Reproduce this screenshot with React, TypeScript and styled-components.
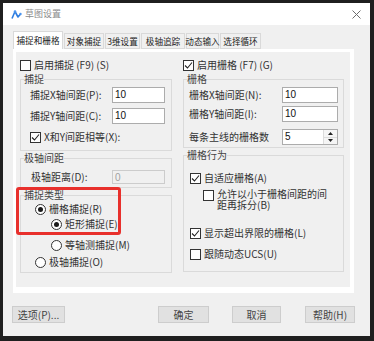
import React from "react";
import styled, { createGlobalStyle } from "styled-components";

const GlobalStyle = createGlobalStyle`
  html, body {
    margin: 0;
    padding: 0;
    background: #1f1f1f;
  }
  body {
    font-family: "Noto Sans CJK SC", "Liberation Sans", sans-serif;
    font-size: 10px;
    color: #333;
  }
`;

const Screen = styled.div`
  width: 374px;
  height: 341px;
  padding: 3px 0 0 3px;
  box-sizing: border-box;
`;

const Dialog = styled.div`
  width: 367px;
  height: 333px;
  background: #f0f0f0;
  display: flex;
  flex-direction: column;
`;

const TitleBar = styled.div`
  height: 22px;
  background: #fff;
  display: flex;
  align-items: center;
  padding: 0 9px 0 8px;
  gap: 3px;
  font-size: 9px;
  color: #8a8a8a;
`;

const TitleText = styled.span`
  flex: 1;
  line-height: 12px;
`;

const Body = styled.div`
  flex: 1;
  display: flex;
  flex-direction: column;
  padding: 6px 0 0 10px;
`;

const TabStrip = styled.div`
  height: 18px;
  display: flex;
  align-items: flex-end;
`;

const Tab = styled.div<{ $active?: boolean; $w: number }>`
  width: ${(p) => p.$w}px;
  height: ${(p) => (p.$active ? 18 : 16)}px;
  box-sizing: border-box;
  margin-right: 1px;
  display: flex;
  align-items: center;
  justify-content: center;
  font-size: 8.6px;
  line-height: 11px;
  white-space: nowrap;
  color: #222;
  background: ${(p) => (p.$active ? "#fff" : "#f0f0f0")};
  border: 1px solid #d9d9d9;
  border-bottom: ${(p) => (p.$active ? "none" : "1px solid #d9d9d9")};
`;

const Panel = styled.div`
  width: 341px;
  height: 244px;
  box-sizing: border-box;
  background: #fff;
  padding: 3px 4px 6px 3px;
`;

const PanelInner = styled.div`
  height: 100%;
  background: #f0f0f0;
  display: grid;
  grid-template-columns: 152px 161px;
  column-gap: 11px;
  padding-left: 4px;
`;

const Column = styled.div`
  display: flex;
  flex-direction: column;
`;

const Group = styled.fieldset<{ $h: number }>`
  position: relative;
  margin: 1px 0 0;
  padding: 0;
  min-width: 0;
  height: ${(p) => p.$h}px;
  box-sizing: border-box;
  border: 1px solid #dadada;
`;

const Legend = styled.legend`
  margin-left: 3px;
  padding: 0;
  font-size: 10px;
  line-height: 12px;
  color: #444;
`;

const GroupBody = styled.div<{ $pad: string; $gap?: number }>`
  display: flex;
  flex-direction: column;
  padding: ${(p) => p.$pad};
  gap: ${(p) => p.$gap ?? 0}px;
`;

const FieldRow = styled.div<{ $mt?: number }>`
  height: 16px;
  display: flex;
  align-items: center;
  justify-content: space-between;
  margin-top: ${(p) => p.$mt ?? 0}px;
  line-height: 12px;
`;

const TextInput = styled.div<{ $w: number; $disabled?: boolean; $h?: number }>`
  width: ${(p) => p.$w}px;
  height: ${(p) => p.$h ?? 16}px;
  box-sizing: border-box;
  border: 1px solid ${(p) => (p.$disabled ? "#cccccc" : "#acacac")};
  background: ${(p) => (p.$disabled ? "#f0f0f0" : "#fff")};
  color: ${(p) => (p.$disabled ? "#a0a0a0" : "#111")};
  font-family: "Liberation Sans", sans-serif;
  font-size: 10px;
  line-height: 12px;
  padding: 1px 2px;
  display: flex;
  align-items: flex-start;
`;

const SpinBox = styled(TextInput)`
  justify-content: space-between;
  padding-right: 0;
  padding-top: 1px;
`;

const SpinButtons = styled.div`
  width: 13px;
  height: 14px;
  margin-top: -1px;
  display: flex;
  flex-direction: column;
  border-left: 1px solid #dcdcdc;
`;

const SpinHalf = styled.div`
  flex: 1;
  display: flex;
  align-items: center;
  justify-content: center;
  background: #f5f5f5;
  & + & {
    border-top: 1px solid #dcdcdc;
  }
`;

const CheckRow = styled.div<{ $mt?: number; $ml?: number; $h?: number }>`
  height: ${(p) => p.$h ?? 14}px;
  display: flex;
  align-items: center;
  gap: 3px;
  margin-top: ${(p) => p.$mt ?? 0}px;
  margin-left: ${(p) => p.$ml ?? 0}px;
  line-height: 12px;
  white-space: nowrap;
`;

const TwoLineRow = styled.div<{ $mt?: number; $ml?: number }>`
  display: flex;
  align-items: flex-start;
  gap: 3px;
  margin-top: ${(p) => p.$mt ?? 0}px;
  margin-left: ${(p) => p.$ml ?? 0}px;
  > span:first-child {
    margin-top: 2px;
  }
`;

const Lines = styled.div`
  display: flex;
  flex-direction: column;
`;

const Line = styled.span`
  height: 11px;
  line-height: 11px;
  white-space: nowrap;
`;

const Box = styled.span`
  width: 11px;
  height: 11px;
  flex: none;
  box-sizing: border-box;
  border: 1px solid #333;
  background: #fff;
  display: flex;
  align-items: center;
  justify-content: center;
`;

const Circle = styled.span`
  width: 11px;
  height: 11px;
  flex: none;
  box-sizing: border-box;
  border: 1px solid #333;
  border-radius: 50%;
  background: #fff;
  display: flex;
  align-items: center;
  justify-content: center;
`;

const Dot = styled.span`
  width: 5px;
  height: 5px;
  border-radius: 50%;
  background: #1a1a1a;
`;

const Highlight = styled.div`
  position: absolute;
  left: -5px;
  top: -14px;
  width: 105px;
  height: 48px;
  box-sizing: border-box;
  border: 3px solid #e8302c;
  border-radius: 3px;
  pointer-events: none;
`;

const Footer = styled.div`
  display: flex;
  align-items: center;
  margin-top: 13px;
  padding-right: 15px;
  margin-left: -1px;
`;

const Button = styled.div<{ $w: number; $ml?: number }>`
  width: ${(p) => p.$w}px;
  height: 17px;
  box-sizing: border-box;
  margin-left: ${(p) => p.$ml ?? 0}px;
  background: #e1e1e1;
  border: 1px solid #cdcdcd;
  display: flex;
  align-items: center;
  justify-content: center;
  font-size: 10px;
  line-height: 12px;
  color: #444;
`;

const Spacer = styled.div`
  flex: 1;
`;

const Check = ({ on }: { on?: boolean }) => (
  <Box>
    {on && (
      <svg width="9" height="9" viewBox="0 0 9 9">
        <polyline points="1,4.5 3.5,7 8,1.5" fill="none" stroke="#222" strokeWidth="1.1" />
      </svg>
    )}
  </Box>
);

const Radio = ({ on }: { on?: boolean }) => <Circle>{on && <Dot />}</Circle>;

const AppIcon = () => (
  <svg width="11" height="11" viewBox="0 0 11 11">
    <path d="M1 9.5 L4 2.5 L7 8 L9.5 5" fill="none" stroke="#2d7de0" strokeWidth="1.6" strokeLinejoin="round" />
    <circle cx="4" cy="2.5" r="1.3" fill="#4c95ee" />
    <circle cx="9.5" cy="5" r="1.2" fill="#4c95ee" />
  </svg>
);

const CloseIcon = () => (
  <svg width="9" height="9" viewBox="0 0 9 9">
    <path d="M0.5 0.5 L8.5 8.5 M8.5 0.5 L0.5 8.5" stroke="#6d6d6d" strokeWidth="1" />
  </svg>
);

const tabs: [string, number][] = [
  ["捕捉和栅格", 50],
  ["对象捕捉", 40],
  ["3维设置", 35],
  ["极轴追踪", 44],
  ["动态输入", 33],
  ["选择循环", 41],
];

export default function App() {
  return (
    <>
      <GlobalStyle />
      <Screen>
        <Dialog>
          <TitleBar>
            <AppIcon />
            <TitleText>草图设置</TitleText>
            <CloseIcon />
          </TitleBar>
          <Body>
            <TabStrip>
              {tabs.map(([t, w], i) => (
                <Tab key={t} $w={w} $active={i === 0}>
                  {t}
                </Tab>
              ))}
            </TabStrip>
            <Panel>
              <PanelInner>
                <Column>
                  <CheckRow $mt={6}>
                    <Check />
                    <span>启用捕捉 (F9) (S)</span>
                  </CheckRow>
                  <Group $h={78}>
                    <Legend>捕捉</Legend>
                    <GroupBody $pad="2px 6px 0 9px" $gap={5}>
                      <FieldRow>
                        <span>捕捉X轴间距(P):</span>
                        <TextInput $w={53}>10</TextInput>
                      </FieldRow>
                      <FieldRow>
                        <span>捕捉Y轴间距(C):</span>
                        <TextInput $w={53}>10</TextInput>
                      </FieldRow>
                      <CheckRow $h={16}>
                        <Check on />
                        <span>X和Y间距相等(X):</span>
                      </CheckRow>
                    </GroupBody>
                  </Group>
                  <Group $h={36}>
                    <Legend>极轴间距</Legend>
                    <GroupBody $pad="5px 6px 0 10px">
                      <FieldRow>
                        <span>极轴距离(D):</span>
                        <TextInput $w={53} $h={14} $disabled>
                          0
                        </TextInput>
                      </FieldRow>
                    </GroupBody>
                  </Group>
                  <Group $h={84}>
                    <Legend>捕捉类型</Legend>
                    <Highlight />
                    <GroupBody $pad="1px 6px 0 14px">
                      <CheckRow>
                        <Radio on />
                        <span>栅格捕捉(R)</span>
                      </CheckRow>
                      <CheckRow $ml={16} $mt={1}>
                        <Radio on />
                        <span>矩形捕捉(E)</span>
                      </CheckRow>
                      <CheckRow $ml={16} $mt={7}>
                        <Radio />
                        <span>等轴测捕捉(M)</span>
                      </CheckRow>
                      <CheckRow $mt={3}>
                        <Radio />
                        <span>极轴捕捉(O)</span>
                      </CheckRow>
                    </GroupBody>
                  </Group>
                </Column>
                <Column>
                  <CheckRow $mt={6}>
                    <Check on />
                    <span>启用栅格 (F7) (G)</span>
                  </CheckRow>
                  <Group $h={75}>
                    <Legend>栅格</Legend>
                    <GroupBody $pad="2px 5px 0 5px">
                      <FieldRow>
                        <span>栅格X轴间距(N):</span>
                        <TextInput $w={56}>10</TextInput>
                      </FieldRow>
                      <FieldRow $mt={3}>
                        <span>栅格Y轴间距(I):</span>
                        <TextInput $w={56}>10</TextInput>
                      </FieldRow>
                      <FieldRow $mt={7}>
                        <span>每条主线的栅格数</span>
                        <SpinBox $w={56}>
                          <span>5</span>
                          <SpinButtons>
                            <SpinHalf>
                              <svg width="5" height="3" viewBox="0 0 5 3">
                                <path d="M0 3 L2.5 0 L5 3 Z" fill="#222" />
                              </svg>
                            </SpinHalf>
                            <SpinHalf>
                              <svg width="5" height="3" viewBox="0 0 5 3">
                                <path d="M0 0 L2.5 3 L5 0 Z" fill="#222" />
                              </svg>
                            </SpinHalf>
                          </SpinButtons>
                        </SpinBox>
                      </FieldRow>
                    </GroupBody>
                  </Group>
                  <Group $h={123}>
                    <Legend>栅格行为</Legend>
                    <GroupBody $pad="0 5px 0 6px">
                      <CheckRow $mt={10}>
                        <Check on />
                        <span>自适应栅格(A)</span>
                      </CheckRow>
                      <TwoLineRow $mt={3} $ml={13}>
                        <Check />
                        <Lines>
                          <Line>允许以小于栅格间距的间</Line>
                          <Line>距再拆分(B)</Line>
                        </Lines>
                      </TwoLineRow>
                      <CheckRow $mt={16}>
                        <Check on />
                        <span>显示超出界限的栅格(L)</span>
                      </CheckRow>
                      <CheckRow $mt={7}>
                        <Check />
                        <span>跟随动态UCS(U)</span>
                      </CheckRow>
                    </GroupBody>
                  </Group>
                </Column>
              </PanelInner>
            </Panel>
            <Footer>
              <Button $w={53}>选项(P)...</Button>
              <Spacer />
              <Button $w={51}>确定</Button>
              <Button $w={49} $ml={23}>
                取消
              </Button>
              <Button $w={50} $ml={24}>
                帮助(H)
              </Button>
            </Footer>
          </Body>
        </Dialog>
      </Screen>
    </>
  );
}
